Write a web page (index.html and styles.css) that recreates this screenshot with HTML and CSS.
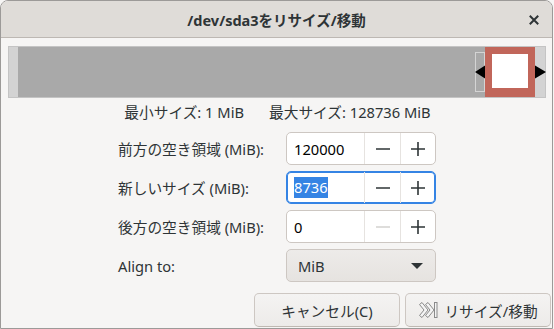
FILE: index.html
```html
<!DOCTYPE html>
<html lang="ja">
<head>
<meta charset="utf-8">
<title>/dev/sda3をリサイズ/移動</title>
<link rel="stylesheet" href="styles.css">
</head>
<body>
<div class="window">
  <div class="header">
    <span class="title">/dev/sda3をリサイズ/移動</span>
    <span class="close">
      <svg width="10" height="10" viewBox="0 0 10 10"><path d="M1.5 1.5 L8.5 8.5 M8.5 1.5 L1.5 8.5" stroke="#2e3436" stroke-width="2" stroke-linecap="square"/></svg>
    </span>
  </div>
  <div class="content">
    <div class="bar">
      <svg width="538" height="52" viewBox="0 0 538 52">
        <rect x="0.5" y="0.5" width="537" height="51" fill="#d3d3d3" stroke="#c4c4c4"/>
        <rect x="10" y="1" width="467" height="50" fill="#a9a9a9"/>
        <rect x="477" y="1" width="50" height="50" fill="#c1665a"/>
        <rect x="484" y="8" width="36" height="34" fill="#ffffff"/>
        <rect x="467.5" y="6.5" width="9" height="39" fill="none" stroke="#d4d4d4"/>
        <path d="M467 26 L477 19.5 L477 32.5 Z" fill="#000"/>
        <path d="M527 19.5 L538 26 L527 32.5 Z" fill="#000"/>
      </svg>
    </div>
    <div class="limits">
      <span>最小サイズ: 1 MiB</span>
      <span>最大サイズ: 128736 MiB</span>
    </div>
    <div class="form">
      <label class="lbl">前方の空き領域 (MiB):</label>
      <div class="spin">
        <span class="val">120000</span>
        <span class="sbtn"><svg width="14" height="14" viewBox="0 0 14 14"><path d="M0 7 H14" stroke="#2e3436" stroke-width="1.6"/></svg></span>
        <span class="sbtn"><svg width="14" height="14" viewBox="0 0 14 14"><path d="M0 7 H14 M7 0 V14" stroke="#2e3436" stroke-width="1.6"/></svg></span>
      </div>
      <label class="lbl">新しいサイズ (MiB):</label>
      <div class="spin focus">
        <span class="val"><span class="sel">8736</span></span>
        <span class="sbtn"><svg width="14" height="14" viewBox="0 0 14 14"><path d="M0 7 H14" stroke="#2e3436" stroke-width="1.6"/></svg></span>
        <span class="sbtn"><svg width="14" height="14" viewBox="0 0 14 14"><path d="M0 7 H14 M7 0 V14" stroke="#2e3436" stroke-width="1.6"/></svg></span>
      </div>
      <label class="lbl">後方の空き領域 (MiB):</label>
      <div class="spin">
        <span class="val">0</span>
        <span class="sbtn"><svg width="14" height="14" viewBox="0 0 14 14"><path d="M0 7 H14" stroke="#d3d2cf" stroke-width="1.6"/></svg></span>
        <span class="sbtn"><svg width="14" height="14" viewBox="0 0 14 14"><path d="M0 7 H14 M7 0 V14" stroke="#2e3436" stroke-width="1.6"/></svg></span>
      </div>
      <label class="lbl">Align to:</label>
      <div class="combo">
        <span>MiB</span>
        <svg width="12" height="6" viewBox="0 0 12 6"><path d="M0 0 H12 L6 6 Z" fill="#2e3436"/></svg>
      </div>
    </div>
    <div class="actions">
      <button class="btn">キャンセル(C)</button>
      <button class="btn">
        <svg class="icon" width="20" height="18" viewBox="0 0 20 18">
          <path d="M1.5 3.5 L4 1.5 L10 9 L4 16.5 L1.5 14.5 L6 9 Z" fill="#f4f4f4" stroke="#8a8a8a" stroke-width="1" stroke-linejoin="round"/>
          <path d="M7.5 3.5 L10 1.5 L16 9 L10 16.5 L7.5 14.5 L12 9 Z" fill="#f4f4f4" stroke="#8a8a8a" stroke-width="1" stroke-linejoin="round"/>
          <rect x="16.5" y="1.5" width="2.5" height="15" fill="#f4f4f4" stroke="#8a8a8a" stroke-width="1"/>
        </svg>
        リサイズ/移動
      </button>
    </div>
  </div>
</div>
</body>
</html>
```

FILE: styles.css
```css
html, body {
  margin: 0;
  padding: 0;
  background: #f6f5f4;
}
body {
  font-family: "Noto Sans", "Noto Sans CJK JP", sans-serif;
  font-size: 14.7px;
  color: #2e3436;
}
.window {
  box-sizing: border-box;
  width: 553px;
  height: 329px;
  border: 1px solid #9c9a98;
  border-radius: 8px 8px 0 0;
  overflow: hidden;
  background: #f6f5f4;
  display: flex;
  flex-direction: column;
}
.header {
  height: 36px;
  flex: none;
  background: #dfdcd8;
  border-bottom: 1px solid #bdb8b3;
  display: flex;
  align-items: center;
  justify-content: center;
  position: relative;
}
.title {
  font-weight: bold;
  font-size: 14.5px;
  font-family: "Noto Sans", "Noto Sans CJK JP", sans-serif;
  color: #2e3436;
}
.close {
  position: absolute;
  right: 13px;
  top: 14px;
  width: 10px;
  height: 10px;
  display: flex;
}
.content {
  flex: 1;
  display: flex;
  flex-direction: column;
}
.bar {
  margin: 8px 0 0 7px;
  height: 52px;
  display: flex;
}
.limits {
  display: flex;
  justify-content: center;
  gap: 25px;
  margin-top: 3px;
  height: 20px;
  align-items: center;
  padding-left: 2px;
}
.form {
  display: grid;
  grid-template-columns: 168px 150px;
  grid-auto-rows: 33px;
  row-gap: 6px;
  justify-content: center;
  margin-top: 11px;
  padding-left: 1px;
}
.lbl {
  display: flex;
  align-items: center;
}
.spin {
  box-sizing: border-box;
  display: flex;
  background: #ffffff;
  border: 1px solid #cdc7c2;
  border-radius: 5px;
}
.spin.focus {
  border-color: #3584e4;
  box-shadow: inset 0 0 0 1px #3584e4;
}
.val {
  width: 79px;
  display: flex;
  align-items: center;
  padding-left: 7px;
  box-sizing: border-box;
  color: #000;
}
.sel {
  background: #3584e4;
  color: #fff;
  line-height: 21px;
}
.sbtn {
  width: 35px;
  border-left: 1px solid #e6e3e0;
  display: flex;
  align-items: center;
  justify-content: center;
}
.combo {
  box-sizing: border-box;
  display: flex;
  align-items: center;
  justify-content: space-between;
  padding: 0 12px 0 11px;
  border: 1px solid #cdc7c2;
  border-radius: 5px;
  background: linear-gradient(#edebe9, #e6e3e0);
}
.actions {
  margin-top: auto;
  display: flex;
  justify-content: flex-end;
  gap: 5px;
  padding: 0 1px 1px 0;
}
.btn {
  box-sizing: border-box;
  width: 146px;
  height: 34px;
  font-family: "Noto Sans", "Noto Sans CJK JP", sans-serif;
  font-size: 14.7px;
  color: #2e3436;
  border: 1px solid #cdc7c2;
  border-bottom-color: #bfb8b1;
  border-radius: 5px;
  background: linear-gradient(#f4f3f2, #edebe9);
  display: flex;
  align-items: center;
  justify-content: center;
  gap: 6px;
  padding: 0;
}
.icon {
  flex: none;
}
```
